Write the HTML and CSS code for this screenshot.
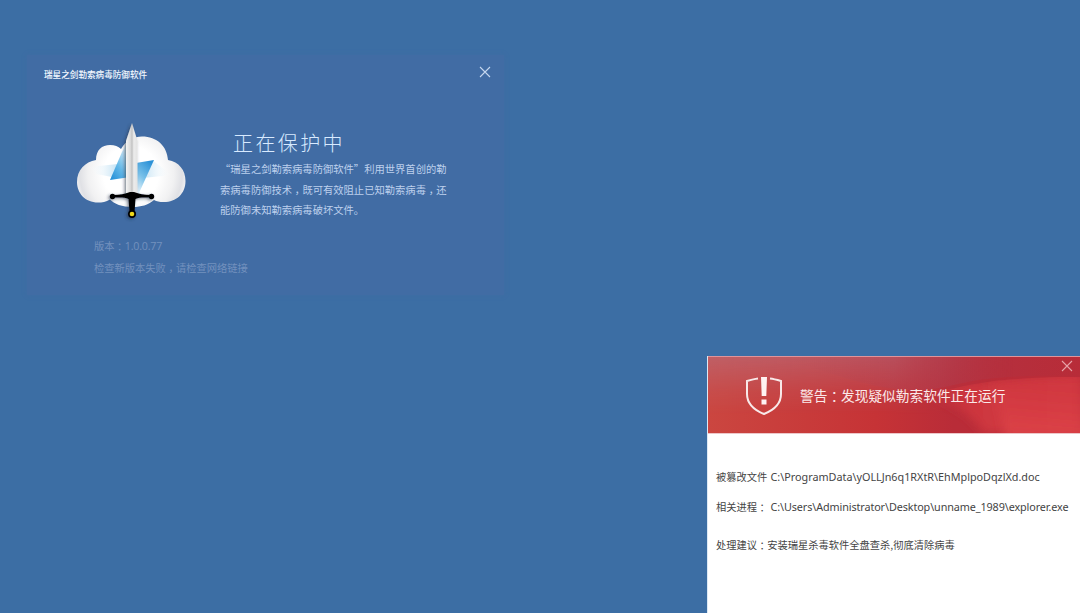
FILE: index.html
```html
<!DOCTYPE html>
<html lang="zh-CN">
<head>
<meta charset="utf-8">
<title>瑞星之剑勒索病毒防御软件</title>
<link rel="stylesheet" href="styles.css">
</head>
<body>
<main class="desktop">
  <section class="shield-window">
    <header class="titlebar">
      <h1 class="app-name">瑞星之剑勒索病毒防御软件</h1>
      <svg class="close" viewBox="0 0 12 12"><path d="M1 1L11 11M11 1L1 11"/></svg>
    </header>
    <div class="status">
      <svg class="emblem" viewBox="0 0 135 110">
        <defs>
          <radialGradient id="cloud" gradientUnits="userSpaceOnUse" cx="66" cy="59" r="55">
            <stop offset="0.5" stop-color="#fff"/><stop offset="0.78" stop-color="#f1f1f2"/><stop offset="0.93" stop-color="#e0e1e5"/><stop offset="1" stop-color="#eeeef1"/>
          </radialGradient>
          <linearGradient id="bolt-left" x1="0" y1="1" x2="0.6" y2="0"><stop offset="0" stop-color="#1d8bd6"/><stop offset="0.5" stop-color="#65b9e8"/><stop offset="1" stop-color="#d5ecf8"/></linearGradient>
          <linearGradient id="bolt-right" x1="0.7" y1="0" x2="0.2" y2="1"><stop offset="0" stop-color="#2a91d7"/><stop offset="0.55" stop-color="#79c1e9"/><stop offset="1" stop-color="#e3f2fa"/></linearGradient>
          <linearGradient id="haze-left"><stop offset="0" stop-color="#fff" stop-opacity="0"/><stop offset="1" stop-color="#bfe0f3"/></linearGradient>
          <linearGradient id="haze-right"><stop offset="0" stop-color="#c5e3f4"/><stop offset="1" stop-color="#fff" stop-opacity="0"/></linearGradient>
          <linearGradient id="blade"><stop offset="0" stop-color="#f4f4f4"/><stop offset="0.46" stop-color="#d4d4d4"/><stop offset="0.5" stop-color="#bdbdbd"/><stop offset="0.68" stop-color="#ececec"/><stop offset="1" stop-color="#e3e3e3"/></linearGradient>
          <filter id="shadow" x="-50%" y="-20%" width="200%" height="140%"><feDropShadow dx="-1.5" dy="1.2" stdDeviation="1.5" flood-color="#25324a" flood-opacity="0.6"/></filter>
        </defs>
        <path fill="url(#cloud)" d="M31 45C31 35 37 30 45 30C50 30 53 31.500 56 34C61 25 69 21.500 77 21.500C92 21.500 102 31 103 45C114 47 120.500 55 120.500 66C120.500 79 111 87 99 87C94 87 92 86.500 89 85C83 90 76 92 68 92C57 92 49 89 45 84.500C41 87 37 87.500 33 87.500C20 87.500 12 78 12 67C12 55 20 47 31 45Z"/>
        <path fill="url(#haze-left)" d="M24 52L53 49L47 62L31 59Z"/>
        <path fill="url(#haze-right)" d="M87 45L107 60L78 63Z"/>
        <path fill="url(#bolt-left)" d="M45 65L57 37L62 28V62.500Z"/>
        <path fill="url(#bolt-right)" d="M71 48L89 45L74 78L71 78Z"/>
        <g filter="url(#shadow)">
          <path fill="url(#blade)" d="M61 78V26L67 8L72.500 26V78Z"/>
          <path d="M48 80C55 80 60 79 65 77H69C74 79 79 80 86 80V82.500C79 82.500 74 82 70.500 84L69.500 97H64.500L63.500 84C60 82 55 82.500 48 82.500Z"/>
          <circle cx="47.500" cy="81.500" r="2.700"/><circle cx="86.500" cy="81.500" r="2.700"/>
          <circle cx="67" cy="99" r="4"/>
        </g>
        <circle cx="67" cy="99" r="2.300" fill="#efd719"/>
      </svg>
      <div class="message">
        <h2 class="state">正在保护中</h2>
        <p class="description">“瑞星之剑勒索病毒防御软件”利用世界首创的勒<br>索病毒防御技术<span class="comma" lang="zh-TW">，</span>既可有效阻止已知勒索病毒<span class="comma" lang="zh-TW">，</span>还<br>能防御未知勒索病毒破坏文件。</p>
      </div>
    </div>
    <footer class="version">
      <p>版本<span class="colon" lang="zh-TW">：</span><span class="number">1.0.0.77</span></p>
      <p>检查新版本失败<span class="comma" lang="zh-TW">，</span>请检查网络链接</p>
    </footer>
  </section>

  <section class="alert-window">
    <header class="alert-header">
      <svg class="waves" viewBox="0 0 372 76" preserveAspectRatio="none">
        <defs>
          <linearGradient id="base" x1="0" y1="0" x2="1" y2="0"><stop offset="0" stop-color="#cb4640"/><stop offset="0.45" stop-color="#c63336"/><stop offset="0.66" stop-color="#b92c38"/><stop offset="1" stop-color="#bb2c38"/></linearGradient>
          <linearGradient id="gloss" x1="0" y1="0" x2="1" y2="0"><stop offset="0" stop-color="#bc6872" stop-opacity="0.75"/><stop offset="0.5" stop-color="#b95f6c" stop-opacity="0.7"/><stop offset="0.82" stop-color="#b6303c" stop-opacity="0"/></linearGradient>
          <linearGradient id="fall" x1="0" y1="0" x2="0" y2="1"><stop offset="0" stop-color="#fff"/><stop offset="0.45" stop-color="#fff" stop-opacity="0.3"/><stop offset="0.75" stop-color="#fff" stop-opacity="0"/></linearGradient>
          <mask id="fade"><rect width="372" height="76" fill="url(#fall)"/></mask>
          <linearGradient id="sheen" x1="0" y1="0" x2="1" y2="0"><stop offset="0" stop-color="#a9455a" stop-opacity="0"/><stop offset="0.5" stop-color="#a9455a" stop-opacity="0.3"/><stop offset="1" stop-color="#a62c3c" stop-opacity="0.15"/></linearGradient>
          <linearGradient id="edge" x1="0" y1="0" x2="1" y2="0"><stop offset="0" stop-color="#c8333c" stop-opacity="0"/><stop offset="0.35" stop-color="#cd363e"/><stop offset="1" stop-color="#d63b43"/></linearGradient>
          <linearGradient id="glow" gradientUnits="userSpaceOnUse" x1="340" y1="20" x2="335" y2="76"><stop offset="0" stop-color="#cb333d" stop-opacity="0.5"/><stop offset="1" stop-color="#e04549" stop-opacity="0.7"/></linearGradient>
          <filter id="soft"><feGaussianBlur stdDeviation="5"/></filter>
          <clipPath id="swell"><path d="M185 45C230 36 265 24 310 22C335 20 355 20 372 20V76H185Z"/></clipPath>
        </defs>
        <rect width="372" height="76" fill="url(#base)"/>
        <rect width="372" height="76" mask="url(#fade)" fill="url(#gloss)"/>
        <path fill="url(#sheen)" d="M90 7C125 16 155 29 190 32C225 36 245 27 270 23C310 18 340 18 372 20V0H90Z"/>
        <g clip-path="url(#swell)">
          <path fill="url(#edge)" d="M205 30L372 18V76H275C265 55 235 42 205 36Z" filter="url(#soft)"/>
          <path fill="url(#glow)" filter="url(#soft)" d="M285 25L390 15V90H300Z"/>
        </g>
      </svg>
      <div class="alert-title">
        <svg class="badge" viewBox="0 0 38 40"><path class="outline" d="M13 2.500C9 3 5.500 4 2 5V18C2 28 9 34 19 38C29 34 36 28 36 18V5C32.500 4 29 3 25 2.500"/><path class="mark" d="M16 1H22L21.300 20H16.700ZM16.500 23.500H21.500V28.500H16.500Z"/></svg>
        <h2>警告<span class="colon" lang="zh-TW">：</span>发现疑似勒索软件正在运行</h2>
        <svg class="close alert-close" viewBox="0 0 12 12"><path d="M1 1L11 11M11 1L1 11"/></svg>
      </div>
    </header>
    <dl class="details">
      <div class="row"><dt>被篡改文件</dt><dd class="file">C:\ProgramData\yOLLJn6q1RXtR\EhMplpoDqzlXd.doc</dd></div>
      <div class="row"><dt>相关进程<span class="colon" lang="zh-TW">：</span></dt><dd class="process">C:\Users\Administrator\Desktop\unname_1989\explorer.exe</dd></div>
      <div class="row advice"><dt>处理建议<span class="colon" lang="zh-TW">：</span></dt><dd>安装瑞星杀毒软件全盘查杀,彻底清除病毒</dd></div>
    </dl>
  </section>
</main>
</body>
</html>
```
FILE: styles.css
```css
* { box-sizing: border-box; margin: 0; padding: 0; }
body { width: 1080px; height: 613px; overflow: hidden; background: #3c6ea4; font-family: "Noto Sans CJK SC", sans-serif; }
h1, h2 { font-weight: 400; }
p, h1, h2, dt, dd { white-space: nowrap; }
.colon, .comma { font-family: "Noto Sans CJK TC", sans-serif; line-height: 0; }
.colon { vertical-align: -1px; }
.comma { vertical-align: -3px; }
.desktop { position: relative; width: 1080px; height: 613px; overflow: hidden; }
.close { width: 12px; height: 12px; fill: none; stroke: #c5d7ef; stroke-width: 1.1; }

.shield-window { position: absolute; left: 27px; top: 55px; width: 477px; height: 240px; background: #416ca4; box-shadow: 0 0 4px #416ca4; }
.titlebar { display: flex; justify-content: space-between; height: 60px; padding: 11px 13px 0 17px; }
.app-name { color: #f3f8ff; font-size: 8.6px; font-weight: 500; line-height: 17px; }
.status { display: flex; height: 118px; padding-left: 38px; }
.emblem { width: 135px; height: 110px; flex: none; }
.message { padding: 13px 0 0 20px; }
.state { padding-left: 13px; color: #d8eaff; font-size: 20px; font-weight: 300; letter-spacing: 2.4px; line-height: 30px; }
.description { padding-top: 1px; color: #bdd0ed; font-size: 10.3px; line-height: 20.5px; }
.version { padding-left: 67px; color: #7391be; font-size: 10.25px; line-height: 22px; padding-top: 2px; }
.number { font-family: "Open Sans", sans-serif; font-size: 10.7px; letter-spacing: -0.2px; }

.alert-window { position: absolute; left: 707px; top: 356px; width: 373px; height: 257px; background: #fff; border-left: 1px solid #dce9f5; }
.alert-header { display: grid; height: 78px; border-top: 1px solid #df949b; border-bottom: 1px solid #edc7c9; }
.waves, .alert-title { grid-area: 1 / 1; width: 372px; height: 76px; }
.alert-title { display: flex; align-items: center; padding: 0 7px 0 37px; z-index: 1; }
.badge { width: 38px; height: 40px; margin-top: 1px; }
.outline { fill: none; stroke: #f8e9e9; stroke-width: 2; }
.mark { fill: #fff2f2; }
.alert-title h2 { margin-left: 17px; color: #fbe9e9; font-size: 13.7px; line-height: 22px; }
.alert-close { align-self: flex-start; margin: 3px 0 0 auto; stroke: #e6a1a7; }
.details { padding: 27px 0 0 8px; color: #444; font-size: 10.25px; line-height: 31px; }
.row { display: flex; height: 30px; }
.row dt { width: 54.5px; flex: none; }
.file, .process { font-family: "Noto Sans", sans-serif; font-size: 10.8px; }
.process { letter-spacing: -0.1px; }
.advice { padding-top: 8px; height: 38px; }
.advice dt { width: 51.3px; }
```
